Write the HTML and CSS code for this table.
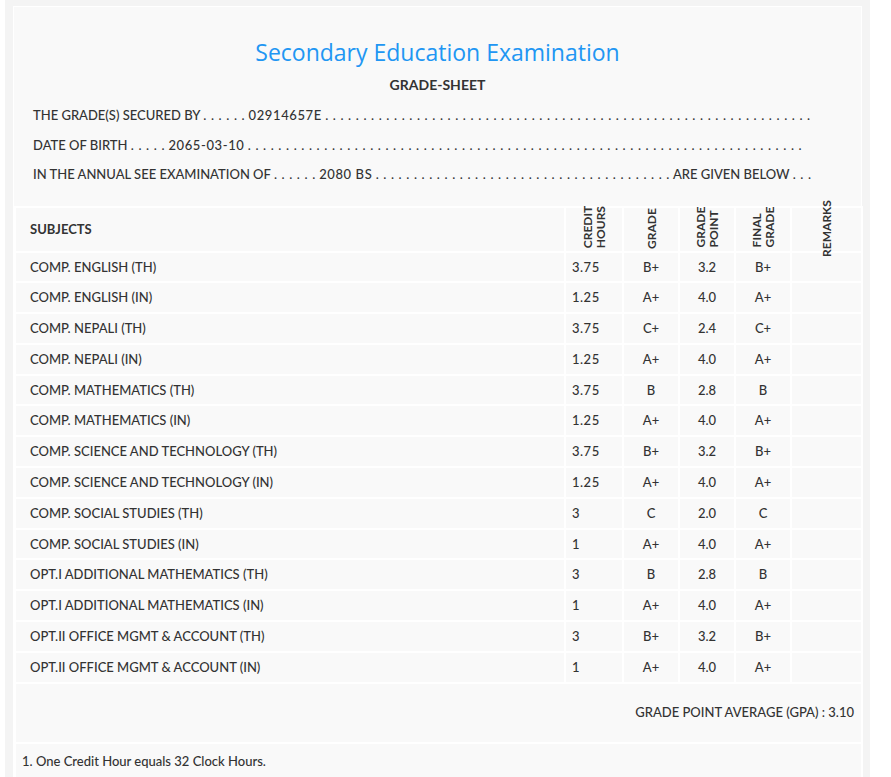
FILE: index.html
```html
<!DOCTYPE html>
<html>
<head>
<meta charset="utf-8">
<link rel="stylesheet" href="styles.css">
</head>
<body>
<div class="page">
  <div class="sheet">
    <h1 class="title">Secondary Education Examination</h1>
    <h2 class="subtitle">GRADE-SHEET</h2>
    <div class="info">
      <p>THE GRADE(S) SECURED BY <span class="dots">. . . . . .</span> <span class="val">02914657E</span> <span class="dots">. . . . . . . . . . . . . . . . . . . . . . . . . . . . . . . . . . . . . . . . . . . . . . . . . . . . . . . . . . . . . . . .</span></p>
      <p>DATE OF BIRTH <span class="dots">. . . . .</span> <span class="val">2065-03-10</span> <span class="dots">. . . . . . . . . . . . . . . . . . . . . . . . . . . . . . . . . . . . . . . . . . . . . . . . . . . . . . . . . . . . . . . . . . . . . . . . .</span></p>
      <p>IN THE ANNUAL SEE EXAMINATION OF <span class="dots">. . . . . .</span> <span class="val">2080 BS</span> <span class="dots">. . . . . . . . . . . . . . . . . . . . . . . . . . . . . . . . . . . . . . .</span> ARE GIVEN BELOW <span class="dots">. . .</span></p>
    </div>
    <table class="grades">
      <colgroup>
        <col class="c-subj">
        <col class="c-credit">
        <col class="c-mid">
        <col class="c-mid">
        <col class="c-mid">
        <col class="c-rem">
      </colgroup>
      <thead>
        <tr>
          <th class="subj">SUBJECTS</th>
          <th><span class="vert">CREDIT<br>HOURS</span></th>
          <th><span class="vert">GRADE</span></th>
          <th><span class="vert">GRADE<br>POINT</span></th>
          <th><span class="vert">FINAL<br>GRADE</span></th>
          <th><span class="vert">REMARKS</span></th>
        </tr>
      </thead>
      <tbody>
        <tr><td class="subj">COMP. ENGLISH (TH)</td><td class="credit">3.75</td><td>B+</td><td>3.2</td><td>B+</td><td></td></tr>
        <tr><td class="subj">COMP. ENGLISH (IN)</td><td class="credit">1.25</td><td>A+</td><td>4.0</td><td>A+</td><td></td></tr>
        <tr><td class="subj">COMP. NEPALI (TH)</td><td class="credit">3.75</td><td>C+</td><td>2.4</td><td>C+</td><td></td></tr>
        <tr><td class="subj">COMP. NEPALI (IN)</td><td class="credit">1.25</td><td>A+</td><td>4.0</td><td>A+</td><td></td></tr>
        <tr><td class="subj">COMP. MATHEMATICS (TH)</td><td class="credit">3.75</td><td>B</td><td>2.8</td><td>B</td><td></td></tr>
        <tr><td class="subj">COMP. MATHEMATICS (IN)</td><td class="credit">1.25</td><td>A+</td><td>4.0</td><td>A+</td><td></td></tr>
        <tr><td class="subj">COMP. SCIENCE AND TECHNOLOGY (TH)</td><td class="credit">3.75</td><td>B+</td><td>3.2</td><td>B+</td><td></td></tr>
        <tr><td class="subj">COMP. SCIENCE AND TECHNOLOGY (IN)</td><td class="credit">1.25</td><td>A+</td><td>4.0</td><td>A+</td><td></td></tr>
        <tr><td class="subj">COMP. SOCIAL STUDIES (TH)</td><td class="credit">3</td><td>C</td><td>2.0</td><td>C</td><td></td></tr>
        <tr><td class="subj">COMP. SOCIAL STUDIES (IN)</td><td class="credit">1</td><td>A+</td><td>4.0</td><td>A+</td><td></td></tr>
        <tr><td class="subj">OPT.I ADDITIONAL MATHEMATICS (TH)</td><td class="credit">3</td><td>B</td><td>2.8</td><td>B</td><td></td></tr>
        <tr><td class="subj">OPT.I ADDITIONAL MATHEMATICS (IN)</td><td class="credit">1</td><td>A+</td><td>4.0</td><td>A+</td><td></td></tr>
        <tr><td class="subj">OPT.II OFFICE MGMT &amp; ACCOUNT (TH)</td><td class="credit">3</td><td>B+</td><td>3.2</td><td>B+</td><td></td></tr>
        <tr><td class="subj">OPT.II OFFICE MGMT &amp; ACCOUNT (IN)</td><td class="credit">1</td><td>A+</td><td>4.0</td><td>A+</td><td></td></tr>
      </tbody>
      <tfoot>
        <tr class="gpa"><td colspan="6">GRADE POINT AVERAGE (GPA) : 3.10</td></tr>
        <tr class="note"><td colspan="6">1. One Credit Hour equals 32 Clock Hours.</td></tr>
      </tfoot>
    </table>
  </div>
</div>
</body>
</html>
```

FILE: styles.css
```css
html, body {
  margin: 0;
  padding: 0;
  background: #ffffff;
}

body {
  font-family: "Lato", "Liberation Sans", sans-serif;
  font-size: 13px;
  font-weight: 500;
  color: #333333;
}

.page {
  margin-left: 5px;
  width: 849px;
  padding: 6px 8px 0 8px;
  background: #f4f4f4;
}

.sheet {
  background: #f9f9f9;
  border: 1px solid #ffffff;
}

.title {
  margin: 30px 0 0 0;
  text-align: center;
  font-family: "Open Sans", "Lato", sans-serif;
  font-weight: 400;
  font-size: 23px;
  line-height: 30px;
  color: #2196f3;
}

.subtitle {
  margin: 8px 0 0 0;
  text-align: center;
  font-size: 14px;
  font-weight: 700;
  line-height: 20px;
  color: #333333;
}

.info {
  margin-top: 6px;
  padding-left: 19px;
}

.info p {
  margin: 0;
  line-height: 29.5px;
  white-space: nowrap;
}

.dots {
  letter-spacing: 0.65px;
}

.val {
  letter-spacing: 0.6px;
}

.grades {
  margin-top: 16px;
  width: 847px;
  table-layout: fixed;
  border-collapse: collapse;
}

.c-subj { width: 550px; }
.c-credit { width: 58px; }
.c-mid { width: 56px; }
.c-rem { width: 71px; }

.grades th,
.grades td {
  border: 2px solid #ffffff;
  padding: 5px 0;
  line-height: 18.8px;
  text-align: center;
  white-space: nowrap;
}

.grades th {
  height: 33px;
  font-weight: 700;
  font-size: 12px;
  overflow: visible;
}

.grades th.subj,
.grades td.subj {
  text-align: left;
  padding-left: 14px;
}

.grades th.subj {
  font-size: 13px;
}

.grades td.credit {
  text-align: left;
  padding-left: 6px;
  letter-spacing: 0.5px;
}

.vert {
  display: inline-block;
  transform: rotate(-90deg);
  line-height: 13px;
  text-align: left;
}

.gpa td {
  height: 48px;
  text-align: right;
  padding-right: 7px;
}

.note td {
  text-align: left;
  padding: 8px 6px 14px 6px;
}
```
